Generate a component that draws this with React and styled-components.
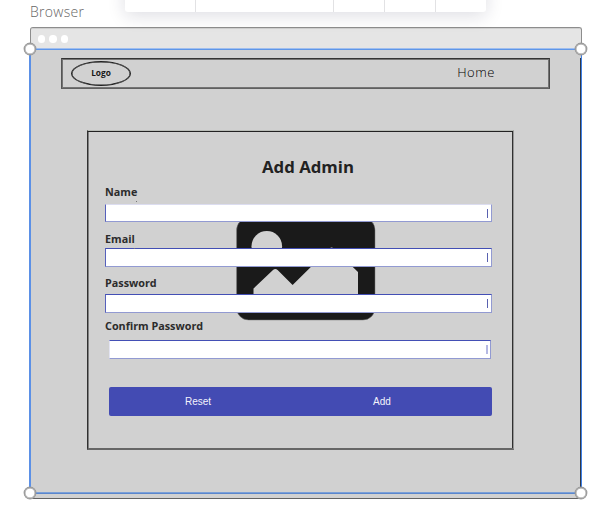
import React from 'react';
import styled, { createGlobalStyle } from 'styled-components';

const GlobalStyle = createGlobalStyle`
  * { box-sizing: border-box; }
  body { margin: 0; background: #fff; font-family: "Open Sans", "Noto Sans", sans-serif; }
`;

const Canvas = styled.main`
  position: relative;
  width: 609px;
  height: 511px;
  padding: 2px 0 0 30px;
  overflow: hidden;
  background: #fff;
`;

const Caption = styled.div`
  height: 25px;
  font-size: 14px;
  line-height: 19px;
  font-weight: 300;
  letter-spacing: 0.3px;
  color: #666;
`;

const FloatingBar = styled.div`
  position: absolute;
  top: -36px;
  left: 125px;
  width: 361px;
  height: 48px;
  display: grid;
  grid-template-columns: 71px 138px 51px 51px 50px;
  border-radius: 3px;
  background: #fff;
  box-shadow: 0 4px 18px rgba(20, 20, 60, 0.14);
`;

const BarCell = styled.div`
  border-right: ${({ $last }) => ($last ? 'none' : '1px solid #e2e2e4')};
`;

const Window = styled.section`
  width: 552px;
  height: 472px;
  display: flex;
  flex-direction: column;
  border: 1px solid #8d8d8d;
  border-bottom-color: #626262;
  border-radius: 3px 3px 0 0;
  background: #d1d1d1;
`;

const TitleBar = styled.header`
  height: 21px;
  flex: none;
  display: flex;
  align-items: center;
  gap: 4px;
  padding-left: 7px;
  border-radius: 2px 2px 0 0;
  border-top: 1px solid #cfcfcf;
  background: #e5e5e5;
`;

const Dot = styled.span`
  width: 7.3px;
  height: 7.3px;
  border-radius: 50%;
  background: #fff;
`;

const Content = styled.div`
  flex: 1;
  margin-top: 9px;
  padding: 0 31px 0 30px;
  box-shadow: inset -1px 0 #2e3848;
`;

const Nav = styled.nav`
  width: 489px;
  height: 31px;
  display: flex;
  align-items: center;
  justify-content: space-between;
  padding: 0 54px 0 8px;
  border: 1px solid #4a4a4a;
  border-top-color: #333;
  border-left-color: #555;
  border-bottom-color: #606060;
  box-shadow: inset 0 0 0 1px #747474;
`;

const Logo = styled.div`
  width: 60px;
  height: 25px;
  display: flex;
  align-items: center;
  justify-content: center;
  border: 1px solid #222;
  box-shadow: inset 0 0 0 0.5px #222;
  border-radius: 50%;
  padding: 0 0 3px 0;
  margin-left: 1px;
  font-size: 8.3px;
  font-weight: 700;
  color: #181818;
`;

const NavLink = styled.span`
  padding-bottom: 3px;
  font-size: 13px;
  line-height: 18px;
  font-weight: 300;
  letter-spacing: 0.55px;
  color: #000;
`;

const Card = styled.form`
  position: relative;
  isolation: isolate;
  width: 427px;
  height: 320px;
  margin: 41px 0 0 26px;
  padding: 0 20px 0 17px;
  border: 1px solid #303030;
  border-top-color: #b9bcb7;
  border-right-color: #969696;
  border-bottom: 2px solid #666;
  box-shadow: inset 0 1px #222, inset 1px 0 #808080, inset -1px 0 #303030;
`;

const Title = styled.h1`
  height: 53px;
  margin: 0;
  padding: 24px 0 0 18px;
  text-align: center;
  font-size: 16.8px;
  line-height: 24px;
  font-weight: 700;
  color: #222;
`;

const Picture = styled.svg`
  position: absolute;
  z-index: -1;
  left: 148px;
  top: 87px;
  width: 140px;
  height: 104px;
`;

const Field = styled.div`
  height: ${({ $height }) => $height}px;
  padding-top: ${({ $top }) => $top}px;
  display: flex;
  flex-direction: column;
  justify-content: space-between;
`;

const Label = styled.label`
  position: relative;
  align-self: flex-start;
  font-size: 10.8px;
  line-height: 15px;
  font-weight: 700;
  color: #2c2c2c;
`;

const Tick = styled.i`
  position: absolute;
  right: 0;
  bottom: -3px;
  width: 1px;
  height: 1px;
  background: #777;
`;

const Input = styled.div`
  width: ${({ $inset }) => ($inset ? 382 : 387)}px;
  height: ${({ $soft }) => ($soft ? 18 : 19)}px;
  margin-left: ${({ $inset }) => ($inset ? 4 : 0)}px;
  display: flex;
  align-items: center;
  justify-content: flex-end;
  padding-right: ${({ $inset }) => ($inset ? 2 : 3)}px;
  border: 1px solid #929ad2;
  border-top-color: ${({ $soft }) => ($soft ? '#dcddf0' : '#434fb5')};
  border-left-color: ${({ $inset }) => ($inset ? '#e3e4f2' : '#5660bb')};
  background: #fff;
`;

const Caret = styled.span`
  width: ${({ $faint }) => ($faint ? 2 : 1)}px;
  height: 9px;
  background: ${({ $faint }) => ($faint ? '#b5b9e3' : '#5961b0')};
`;

const Actions = styled.div`
  width: 383px;
  height: 29px;
  margin: 28px 0 0 4px;
  display: flex;
  border-radius: 2px;
  background: #434bb3;
`;

const Action = styled.button`
  width: ${({ $width }) => $width}px;
  border: 0;
  padding: 0 0 1px;
  background: transparent;
  font-family: "Liberation Sans", Arial, sans-serif;
  font-size: 10px;
  color: #f3f3fb;
`;

const Selection = styled.div`
  position: absolute;
  left: 29px;
  top: 48px;
  width: 553px;
  height: 446px;
  border: 1px solid #a0beee;
  border-left: 2px solid #5b90e6;
  border-right-color: #3e80e6;
  border-bottom-color: #5a86cc;
  box-shadow: inset 0 1px #5f96e8, inset 0 -1px #7ba0d8;
`;

const Handle = styled.span`
  position: absolute;
  left: ${({ $x }) => $x - 6}px;
  top: ${({ $y }) => $y - 6}px;
  width: 12px;
  height: 12px;
  border: 1px solid #999;
  box-shadow: 0 0 0 0.4px #999, inset 0 0 0 0.4px #999;
  border-radius: 50%;
  background: #fff;
`;

const fields = [
  { label: 'Name', height: 38, top: 0, soft: true, tick: true },
  { label: 'Email', height: 45, top: 9, tick: true },
  { label: 'Password', height: 46, top: 8 },
  { label: 'Confirm Password', height: 46, top: 5, inset: true },
];

const handles = [[30, 49], [581, 49], [30, 493], [581, 493]];

export default function App() {
  return (
    <>
      <GlobalStyle />
      <Canvas>
        <Caption>Browser</Caption>
        <Window>
          <TitleBar><Dot /><Dot /><Dot /></TitleBar>
          <Content>
            <Nav>
              <Logo>Logo</Logo>
              <NavLink>Home</NavLink>
            </Nav>
            <Card>
              <Title>Add Admin</Title>
              <Picture viewBox="236 218 140 104">
                <rect x="236.6" y="218" width="138.4" height="102" rx="12" fill="#1a1a1a" stroke="#777" strokeWidth=".5" />
                <circle cx="266.8" cy="246.3" r="15.3" fill="#d1d1d1" />
                <path d="M253.5 303V288.5L273 270q2.3-2.2 4.6 0l15 15 37-36.5q2-2 4 0L358 272v31Z" fill="#d1d1d1" />
              </Picture>
              {fields.map((f) => (
                <Field key={f.label} $height={f.height} $top={f.top}>
                  <Label>
                    {f.label}
                    {f.tick && <Tick />}
                  </Label>
                  <Input $soft={f.soft} $inset={f.inset}><Caret $faint={f.inset} /></Input>
                </Field>
              ))}
              <Actions>
                <Action type="button" $width={178}>Reset</Action>
                <Action type="button" $width={190}>Add</Action>
              </Actions>
            </Card>
          </Content>
        </Window>
        <FloatingBar>
          <BarCell /><BarCell /><BarCell /><BarCell /><BarCell $last />
        </FloatingBar>
        <Selection />
        {handles.map(([x, y]) => <Handle key={`${x}-${y}`} $x={x} $y={y} />)}
      </Canvas>
    </>
  );
}
